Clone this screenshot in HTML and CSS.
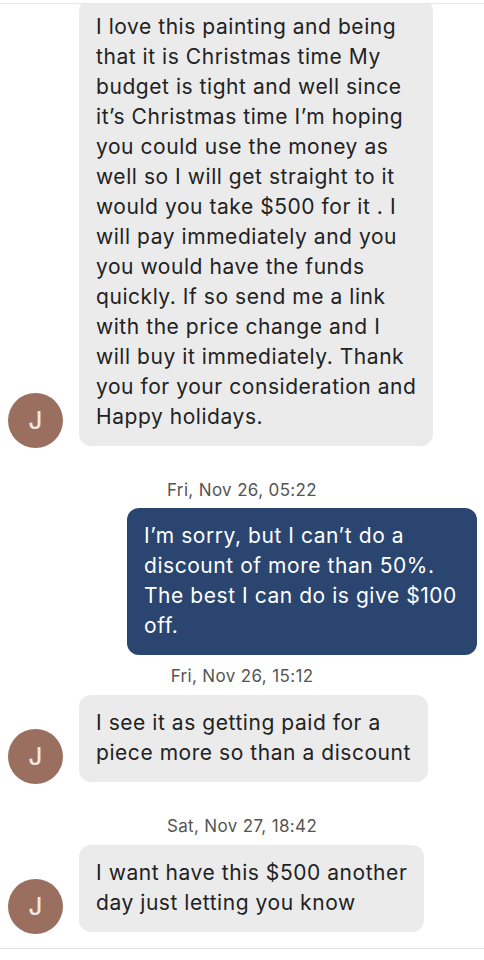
FILE: index.html
```html
<!DOCTYPE html>
<html>
<head>
<meta charset="utf-8">
<link rel="stylesheet" href="styles.css">
</head>
<body>
<div class="thread">
  <div class="messages">
    <div class="row in first">
      <div class="avatar">J</div>
      <div class="bubble">I love this painting and being<br>that it is Christmas time My<br>budget is tight and well since<br>it’s Christmas time I’m hoping<br>you could use the money as<br>well so I will get straight to it<br>would you take $500 for it . I<br>will pay immediately and you<br>you would have the funds<br>quickly. If so send me a link<br>with the price change and I<br>will buy it immediately. Thank<br>you for your consideration and<br>Happy holidays.</div>
    </div>
    <div class="stamp s1">Fri, Nov 26, 05:22</div>
    <div class="row out">
      <div class="bubble mine">I’m sorry, but I can’t do a<br>discount of more than 50%.<br>The best I can do is give $100<br>off.</div>
    </div>
    <div class="stamp s2">Fri, Nov 26, 15:12</div>
    <div class="row in">
      <div class="avatar">J</div>
      <div class="bubble">I see it as getting paid for a<br>piece more so than a discount</div>
    </div>
    <div class="stamp s3">Sat, Nov 27, 18:42</div>
    <div class="row in">
      <div class="avatar">J</div>
      <div class="bubble">I want have this $500 another<br>day just letting you know</div>
    </div>
  </div>
</div>
</body>
</html>
```
FILE: styles.css
```css
html, body {
  margin: 0;
  padding: 0;
  background: #ffffff;
}
body {
  font-family: Inter, "Liberation Sans", sans-serif;
  color: #222222;
  width: 484px;
  height: 960px;
  overflow: hidden;
}
.thread {
  padding-top: 3px;
}
.messages {
  border-top: 1px solid #e8e8e8;
  border-bottom: 1px solid #e4e4e4;
  overflow: hidden;
  height: 944px;
  display: flex;
  flex-direction: column;
}
.row {
  display: flex;
  align-items: flex-end;
  gap: 16px;
  padding-left: 8px;
  padding-right: 7px;
}
.row.first {
  margin-top: -5px;
}
.row.out {
  justify-content: flex-end;
}
.avatar {
  flex: none;
  width: 55px;
  height: 55px;
  border-radius: 50%;
  background: #9b6f60;
  color: #f3e9e3;
  display: flex;
  align-items: center;
  justify-content: center;
  font-size: 24px;
  font-weight: 500;
  margin-bottom: -2px;
}
.bubble {
  background: #ebebeb;
  border-radius: 12px;
  padding: 13px 17px 14px 17px;
  font-size: 21px;
  line-height: 30px;
  letter-spacing: 0.55px;
  color: #222222;
  white-space: nowrap;
}
.bubble.mine {
  background: #2a4570;
  color: #ffffff;
  width: 316px;
}
.stamp {
  text-align: center;
  font-size: 17px;
  line-height: 20px;
  letter-spacing: 0.35px;
  color: #555555;
}
.s1 { margin: 34px 0 8px; }
.s2 { margin: 11px 0 9px; }
.s3 { margin: 34px 0 9px; }
```
